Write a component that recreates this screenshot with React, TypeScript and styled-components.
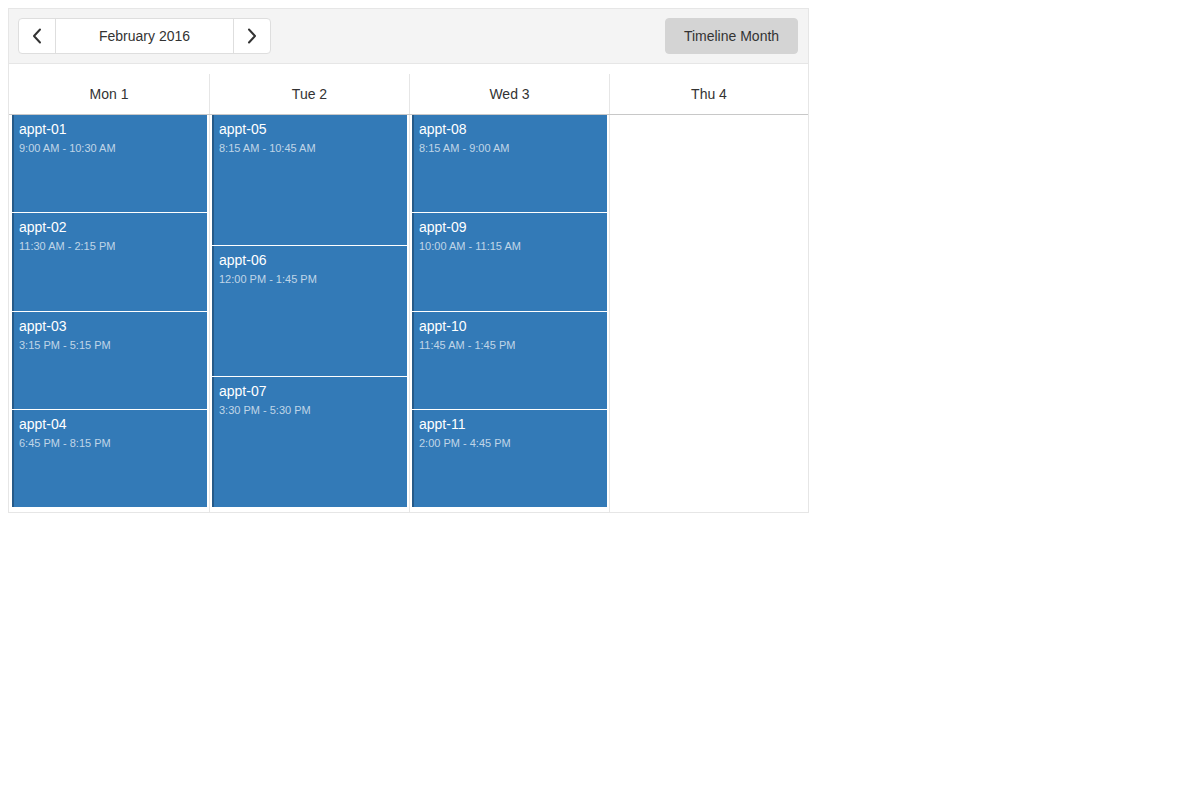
import React from "react";
import styled, { createGlobalStyle } from "styled-components";

const Global = createGlobalStyle`
  body {
    margin: 8px;
    font-family: "Liberation Sans", Arial, sans-serif;
    background: #fff;
    color: #333;
  }
`;

const Scheduler = styled.div`
  width: 801px;
  box-sizing: border-box;
  border: 1px solid #e6e6e6;
  background: #fff;
`;

const Toolbar = styled.div`
  display: flex;
  align-items: center;
  justify-content: space-between;
  height: 54px;
  padding: 0 10px 0 9px;
  background: #f4f4f4;
  border-bottom: 1px solid #e6e6e6;
`;

const NavGroup = styled.div`
  display: flex;
  height: 36px;
  border: 1px solid #dedede;
  border-radius: 4px;
  background: #fff;
  box-sizing: border-box;
`;

const NavButton = styled.button`
  width: 36px;
  display: flex;
  align-items: center;
  justify-content: center;
  border: none;
  background: transparent;
  padding: 0;
  color: #333;
`;

const NavLabel = styled.div`
  width: 179px;
  display: flex;
  align-items: center;
  justify-content: center;
  font-size: 14px;
  color: #333;
  border-left: 1px solid #dedede;
  border-right: 1px solid #dedede;
  box-sizing: border-box;
`;

const ViewButton = styled.button`
  height: 36px;
  width: 133px;
  border: 1px solid #d4d4d4;
  border-radius: 4px;
  background: #d4d4d4;
  font-family: "Liberation Sans", Arial, sans-serif;
  font-size: 14px;
  color: #333;
  padding: 0;
`;

const Grid = styled.div`
  display: grid;
  grid-template-columns: 201px 200px 200px 1fr;
`;

const HeaderCell = styled.div`
  height: 51px;
  padding-top: 10px;
  box-sizing: border-box;
  border-bottom: 1px solid #c8c8c8;
  display: flex;
`;

const HeaderLabel = styled.div<{ $last?: boolean }>`
  flex: 1;
  display: flex;
  align-items: center;
  justify-content: center;
  font-size: 14px;
  color: #333;
  border-right: ${(p) => (p.$last ? "none" : "1px solid #e6e6e6")};
`;

const Column = styled.div<{ $last?: boolean; $first?: boolean }>`
  height: 397px;
  box-sizing: border-box;
  padding: 0 2px 5px ${(p) => (p.$first ? "3px" : "2px")};
  border-right: ${(p) => (p.$last ? "none" : "1px solid #e6e6e6")};
  display: flex;
  flex-direction: column;
  gap: 1px;
`;

const Event = styled.div`
  flex: 1;
  min-height: 0;
  background: #337ab7;
  border-left: 2px solid #265a88;
  padding: 4px 5px;
  color: #fff;
  overflow: hidden;
`;

const EventTitle = styled.div`
  font-size: 14px;
  line-height: 20px;
  color: #fff;
`;

const EventTime = styled.div`
  font-size: 11px;
  line-height: 18px;
  color: rgba(255, 255, 255, 0.7);
`;

const Chevron = ({ dir }: { dir: "left" | "right" }) => (
  <svg width="10" height="16" viewBox="0 0 10 16" fill="none">
    <polyline
      points={dir === "left" ? "8,1.5 2,8 8,14.5" : "2,1.5 8,8 2,14.5"}
      stroke="#333"
      strokeWidth="2"
      strokeLinecap="round"
      strokeLinejoin="round"
    />
  </svg>
);

type Appt = { title: string; time: string };

const days: { label: string; appts: Appt[] }[] = [
  {
    label: "Mon 1",
    appts: [
      { title: "appt-01", time: "9:00 AM - 10:30 AM" },
      { title: "appt-02", time: "11:30 AM - 2:15 PM" },
      { title: "appt-03", time: "3:15 PM - 5:15 PM" },
      { title: "appt-04", time: "6:45 PM - 8:15 PM" },
    ],
  },
  {
    label: "Tue 2",
    appts: [
      { title: "appt-05", time: "8:15 AM - 10:45 AM" },
      { title: "appt-06", time: "12:00 PM - 1:45 PM" },
      { title: "appt-07", time: "3:30 PM - 5:30 PM" },
    ],
  },
  {
    label: "Wed 3",
    appts: [
      { title: "appt-08", time: "8:15 AM - 9:00 AM" },
      { title: "appt-09", time: "10:00 AM - 11:15 AM" },
      { title: "appt-10", time: "11:45 AM - 1:45 PM" },
      { title: "appt-11", time: "2:00 PM - 4:45 PM" },
    ],
  },
  { label: "Thu 4", appts: [] },
];

export default function App() {
  return (
    <>
      <Global />
      <Scheduler>
        <Toolbar>
          <NavGroup>
            <NavButton aria-label="previous">
              <Chevron dir="left" />
            </NavButton>
            <NavLabel>February 2016</NavLabel>
            <NavButton aria-label="next">
              <Chevron dir="right" />
            </NavButton>
          </NavGroup>
          <ViewButton>Timeline Month</ViewButton>
        </Toolbar>
        <Grid>
          {days.map((d, i) => (
            <HeaderCell key={d.label}>
              <HeaderLabel $last={i === days.length - 1}>{d.label}</HeaderLabel>
            </HeaderCell>
          ))}
          {days.map((d, i) => (
            <Column key={d.label} $first={i === 0} $last={i === days.length - 1}>
              {d.appts.map((a) => (
                <Event key={a.title}>
                  <EventTitle>{a.title}</EventTitle>
                  <EventTime>{a.time}</EventTime>
                </Event>
              ))}
            </Column>
          ))}
        </Grid>
      </Scheduler>
    </>
  );
}
